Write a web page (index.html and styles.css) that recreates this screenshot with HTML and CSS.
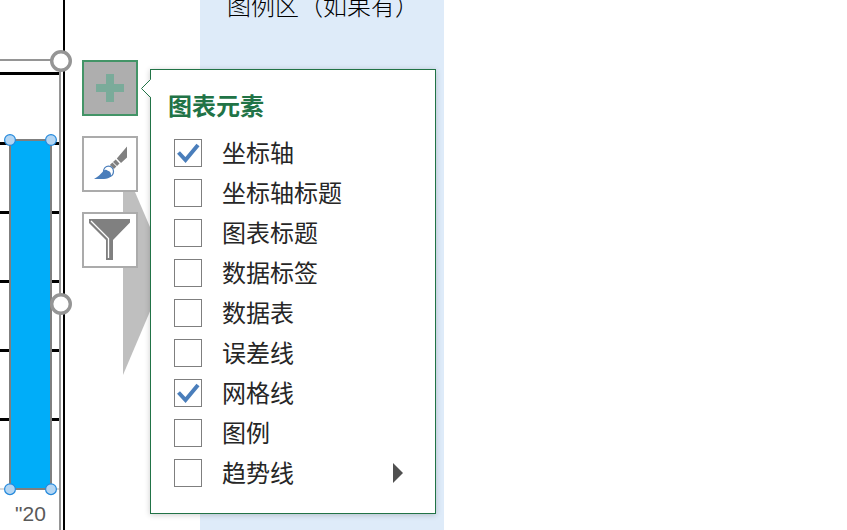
FILE: index.html
```
<!DOCTYPE html>
<html lang="zh-CN">
<head>
    <meta charset="UTF-8">
    <meta name="viewport" content="width=device-width, initial-scale=1.0">
    <title>图表元素</title>
    <link rel="stylesheet" href="styles.css">
</head>
<body>

<div class="sheet">
    <svg class="chart" width="180" height="530" viewBox="0 0 180 530">
        <!-- arrow shape -->
        <polygon points="123,164 168,269 123,375" fill="#bfbfbf"/>
        <!-- grid lines -->
        <g fill="#000">
            <rect x="0" y="72" width="59" height="3"/>
            <rect x="0" y="142" width="59" height="3"/>
            <rect x="0" y="211" width="59" height="3"/>
            <rect x="0" y="280" width="59" height="3"/>
            <rect x="0" y="349" width="59" height="3"/>
            <rect x="0" y="418" width="59" height="3"/>
            <rect x="63" y="0" width="2" height="530"/>
        </g>
        <rect x="0" y="488" width="59" height="2" fill="#d9d9d9"/>
        <!-- chart frame -->
        <rect x="0" y="59" width="61" height="2" fill="#959595"/>
        <rect x="59" y="60" width="2" height="470" fill="#959595"/>
        <!-- selected bar -->
        <rect x="10" y="140" width="41" height="349" fill="#00adf9" stroke="#7f7f7f" stroke-width="2"/>
        <g fill="#b4d6f3" stroke="#2489dc" stroke-width="1.2">
            <circle cx="10" cy="140" r="5.4"/>
            <circle cx="51" cy="140" r="5.4"/>
            <circle cx="10" cy="489.2" r="5.4"/>
            <circle cx="51" cy="489.2" r="5.4"/>
        </g>
        <g fill="#fff" stroke="#959595" stroke-width="3.4">
            <circle cx="61" cy="61" r="9.3"/>
            <circle cx="61" cy="304" r="9.3"/>
        </g>
        <text class="axis-label" x="15" y="521">"20</text>
    </svg>
    <div class="column">
        <p class="column-text">图例区（如果有）</p>
    </div>
</div>

<div class="chart-buttons">
    <button class="chart-button active" aria-label="图表元素">
        <svg width="52" height="52" viewBox="0 0 52 52">
            <path d="M22 12h8v10h10v8H30v10h-8V30H12v-8h10z" fill="#7aab9a"/>
        </svg>
    </button>
    <button class="chart-button" aria-label="图表样式">
        <svg width="52" height="52" viewBox="0 0 52 52">
            <path d="M43 8.500V19.500L37 25L32.800 20.500zM31.700 21.500l3.800 4-2.500 2.500-4-4zM28.400 24.500l4 4-2.500 2.500-4-4z" fill="#808080"/>
            <ellipse cx="24.500" cy="33.500" rx="5" ry="5.400" fill="#fff" stroke="#4a7ebb" stroke-width="1.200"/>
            <path d="M10 41c4-2 6.500-5 9.500-8 1-1.500 3-1.500 4.300-.3 2 .3 3.500 2 3.200 5.300-1.500 2-4 3-7 3z" fill="#4a7ebb"/>
        </svg>
    </button>
    <button class="chart-button" aria-label="图表筛选器">
        <svg width="52" height="52" viewBox="0 0 52 52">
            <path d="M5 5h41v3.500L29 26v20h-7V26L5 9z" fill="#808080"/>
            <path d="M7 7L24.500 24.500v19.500" fill="none" stroke="#fff" stroke-width="1.300"/>
        </svg>
    </button>
</div>

<div class="popup">
    <svg class="popup-arrow" width="11" height="19" viewBox="0 0 11 19">
        <path d="M10 0L1 9.500L10 18.500h1V0z" fill="#fff"/>
        <path d="M9.500 .5L.5 9.500L9.500 18.500" fill="none" stroke="#217346"/>
    </svg>
    <h2 class="popup-title">图表元素</h2>
    <ul class="options">
        <li class="option"><span class="box"><svg class="tick" viewBox="0 0 26 26"><path d="M3.500 12.500l7 7.500L23 5"/></svg></span>坐标轴</li>
        <li class="option"><span class="box"></span>坐标轴标题</li>
        <li class="option"><span class="box"></span>图表标题</li>
        <li class="option"><span class="box"></span>数据标签</li>
        <li class="option"><span class="box"></span>数据表</li>
        <li class="option"><span class="box"></span>误差线</li>
        <li class="option"><span class="box"><svg class="tick" viewBox="0 0 26 26"><path d="M3.500 12.500l7 7.500L23 5"/></svg></span>网格线</li>
        <li class="option"><span class="box"></span>图例</li>
        <li class="option"><span class="box"></span>趋势线<span class="more"></span></li>
    </ul>
</div>

</body>
</html>
```
FILE: styles.css
```
body {
    margin: 0;
    height: 530px;
    position: relative;
    overflow: hidden;
    background-color: #fff;
    font-family: "Liberation Sans", "Noto Sans CJK SC", sans-serif;
}

.sheet {
    display: flex;
    height: 530px;
}

.chart {
    display: block;
    margin-right: 20px;
}

.axis-label {
    font-size: 21px;
    fill: #595959;
}

.column {
    width: 244px;
    background-color: #deebf9;
}

.column-text {
    margin: -9px 0 0 27px;
    font-size: 24px;
    line-height: 32px;
    font-weight: 300;
    color: #000;
    white-space: nowrap;
}

/* Buttons beside the selected chart */
.chart-buttons {
    position: absolute;
    left: 82px;
    top: 60px;
    display: flex;
    flex-direction: column;
    gap: 20px;
}

.chart-button {
    width: 56px;
    height: 56px;
    padding: 0;
    border: 2px solid #ababab;
    background-color: #fff;
}

.chart-button svg {
    display: block;
}

.chart-button.active {
    border-color: #439467;
    background-color: #aeaeae;
}

/* Flyout */
.popup {
    position: absolute;
    left: 150px;
    top: 69px;
    width: 286px;
    height: 445px;
    box-sizing: border-box;
    padding: 19px 32px 0 23px;
    border: 1px solid #217346;
    background-color: #fff;
    box-shadow: 0 1px 6px rgba(0, 0, 0, 0.2);
}

.popup-arrow {
    position: absolute;
    left: -10px;
    top: 9px;
}

.popup-title {
    margin: 0 0 9px -6px;
    font-size: 24px;
    line-height: 35px;
    font-weight: bold;
    color: #217346;
}

.options {
    margin: 0;
    padding: 0;
    list-style: none;
}

.option {
    display: flex;
    align-items: center;
    box-sizing: border-box;
    height: 40px;
    padding-top: 2px;
    font-size: 24px;
    line-height: 38px;
    color: #262626;
}

.box {
    width: 26px;
    height: 26px;
    margin: -2px 20px 0 0;
    border: 1px solid #7f7f7f;
}

.tick {
    display: block;
    width: 26px;
    height: 26px;
    fill: none;
    stroke: #4a7ebb;
    stroke-width: 4;
}

/* Submenu marker */
.more {
    margin: -2px 0 0 auto;
    border-left: 10px solid #505050;
    border-top: 10px solid transparent;
    border-bottom: 10px solid transparent;
}
```
